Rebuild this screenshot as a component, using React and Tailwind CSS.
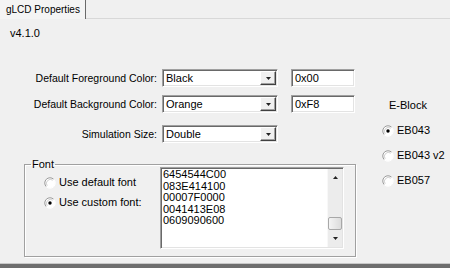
import React from "react"

const sunken =
  "border border-t-[#a0a0a0] border-l-[#a0a0a0] border-r-white border-b-white shadow-[inset_1px_1px_0_#696969,inset_-1px_-1px_0_#e3e3e3] bg-white"

const Radio = ({ checked, label }) => (
  <div className="flex items-center h-[13px]">
    <svg width="12" height="12" viewBox="0 0 12 12" className="shrink-0">
      <circle cx="6" cy="6" r="5" fill="#fff" />
      <path d="M2.3 9.7 A5.2 5.2 0 0 1 9.7 2.3" fill="none" stroke="#9a9a9a" strokeWidth="1" />
      <path d="M9.7 2.3 A5.2 5.2 0 0 1 2.3 9.7" fill="none" stroke="#ffffff" strokeWidth="1" />
      <path d="M3.2 8.8 A4 4 0 0 1 8.8 3.2" fill="none" stroke="#d0d0d0" strokeWidth="1" />
      {checked && <circle cx="6" cy="6" r="1.7" fill="#000" />}
    </svg>
    <span className="ml-[3px] text-[11px] leading-[13px] whitespace-nowrap">{label}</span>
  </div>
)

const Arrow = ({ up }) => (
  <svg width="5" height="3" viewBox="0 0 5 3">
    <polygon points={up ? "2.5,0 5,3 0,3" : "0,0 5,0 2.5,3"} fill="#222" />
  </svg>
)

const Combo = ({ value }) => (
  <div className={`w-[116px] h-[18px] flex items-center ${sunken}`}>
    <span className="flex-1 pl-[3px] text-[11px] leading-[13px]">{value}</span>
    <div className="w-[16px] h-[14px] mr-[1px] flex items-center justify-center bg-[#f0f0f0] border border-t-white border-l-white border-r-[#404040] border-b-[#404040] shadow-[inset_-1px_-1px_0_#a0a0a0]">
      <Arrow />
    </div>
  </div>
)

const TextBox = ({ value }) => (
  <div className={`w-[64px] h-[18px] flex items-center ml-[13px] ${sunken}`}>
    <span className="pl-[3px] text-[11px] leading-[13px]">{value}</span>
  </div>
)

const Row = ({ label, value, hex, className }) => (
  <div className={`flex items-center h-[18px] ${className || ""}`}>
    <div className="w-[157px] text-right text-[10.5px] leading-[13px] whitespace-nowrap">{label}</div>
    <div className="ml-[5px]">
      <Combo value={value} />
    </div>
    {hex && <TextBox value={hex} />}
  </div>
)

const fontRows = ["6454544C00", "083E414100", "00007F0000", "0041413E08", "0609090600"]

export default function App() {
  return (
    <div
      className="w-[450px] h-[268px] bg-[#f0f0f0] flex flex-col overflow-hidden text-black"
      style={{ fontFamily: '"Liberation Sans", Arial, sans-serif' }}
    >
      {/* tab strip */}
      <div className="h-[19px] flex shrink-0">
        <div className="w-[86px] h-full border-r border-r-[#6a6a6a] bg-[#f4f4f4] flex items-center pl-[6px]">
          <span className="text-[10px] leading-[12px] whitespace-nowrap">gLCD Properties</span>
        </div>
        <div className="flex-1 border-b border-b-[#d8d8d8]" />
      </div>

      {/* page */}
      <div className="flex-1 flex flex-col">
        <div className="ml-[10px] mt-[8px] text-[11px] leading-[13px]">v4.1.0</div>

        <div className="flex mt-[29px]">
          <div className="w-[357px] flex flex-col">
            <Row label="Default Foreground Color:" value="Black" hex="0x00" />
            <Row label="Default Background Color:" value="Orange" hex="0xF8" className="mt-[8px]" />
            <Row label="Simulation Size:" value="Double" className="mt-[12px]" />

            <fieldset className="ml-[24px] mr-[1px] mt-[15px] border border-[#a0a0a0] shadow-[inset_1px_1px_0_#fff,1px_1px_0_#fff] pb-[7px]">
              <legend className="ml-[6px] px-[1px] text-[11px] leading-[13px]">Font</legend>
              <div className="flex -mt-[4px]">
                <div className="w-[135px] pl-[19px] flex flex-col gap-[7px] pt-[9px]">
                  <Radio label="Use default font" />
                  <Radio label="Use custom font:" checked />
                </div>
                <div className={`w-[184px] h-[82px] flex ${sunken}`}>
                  <div className="flex-1 pl-[2px] pt-[1px] text-[11px] leading-[11.5px]">
                    {fontRows.map((r) => (
                      <div key={r}>{r}</div>
                    ))}
                  </div>
                  <div className="w-[15px] my-[1px] mr-[1px] flex flex-col bg-[#ececec] border-l border-l-[#f8f8f8]">
                    <div className="h-[17px] flex items-center justify-center">
                      <Arrow up />
                    </div>
                    <div className="flex-1" />
                    <div className="h-[13px] bg-gradient-to-r from-[#f4f4f4] to-[#dcdcdc] border border-[#a8a8a8] rounded-[2px]" />
                    <div className="h-[17px] flex items-center justify-center">
                      <Arrow />
                    </div>
                  </div>
                </div>
              </div>
            </fieldset>
          </div>

          {/* E-Block */}
          <div className="flex flex-col pl-[25px]">
            <div className="ml-[7px] mt-[30px] text-[11px] leading-[13px]">E-Block</div>
            <div className="flex flex-col gap-[12px] mt-[12px]">
              <Radio label="EB043" checked />
              <Radio label="EB043 v2" />
              <Radio label="EB057" />
            </div>
          </div>
        </div>
      </div>

      {/* bottom edge */}
      <div className="h-[1px] bg-[#c8c8c8] shrink-0" />
      <div className="h-[4px] bg-[#6e6e6e] shrink-0" />
    </div>
  )
}
